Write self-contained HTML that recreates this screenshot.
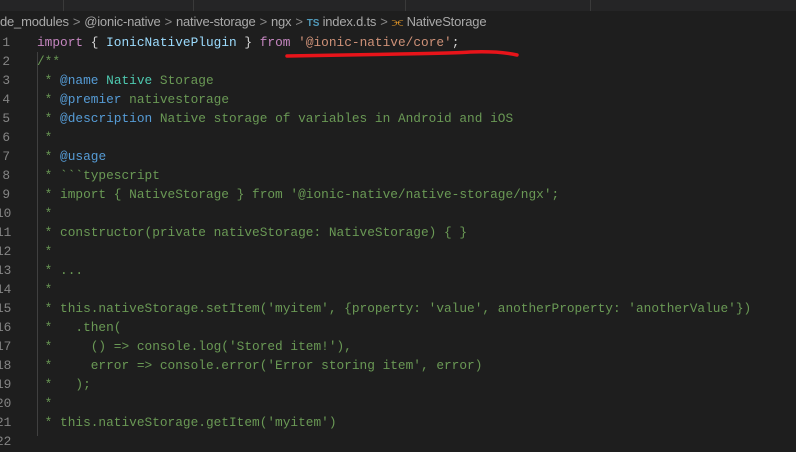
<!DOCTYPE html>
<html><head><style>
body{margin:0;width:796px;height:436px;background:#1e1e1e;overflow:hidden;position:relative;font-family:"Liberation Mono",monospace;}
.tabs{position:absolute;left:0;top:0;width:796px;height:11px;background:#252526;}
.tabs i{position:absolute;top:0;width:1px;height:11px;background:#3a3a3a}
.bc{position:absolute;left:0;top:12px;height:20px;line-height:20px;font-family:"Liberation Sans",sans-serif;font-size:13px;color:#a9a9a9;white-space:nowrap;letter-spacing:-0.2px}
.bc .s{color:#8a8a8a;margin:0 4px}
.ln{position:absolute;left:-4px;width:14px;font-size:12.8px;color:#858585;text-align:right}
.code{position:absolute;left:37px;font-size:12.8px;color:#6a9955}
.l{height:19.05px;line-height:19.05px;white-space:pre}
.k{color:#c586c0}.t{color:#4ec9b0}.v{color:#9cdcfe}.p{color:#d4d4d4}.st{color:#ce9178}.a{color:#569cd6}
</style></head><body>
<div class="tabs"><i style="left:63px"></i><i style="left:193px"></i><i style="left:405px"></i><i style="left:590px"></i></div>
<div class="bc">de_modules<span class="s">&gt;</span>@ionic-native<span class="s">&gt;</span>native-storage<span class="s">&gt;</span>ngx<span class="s">&gt;</span><span style="color:#519aba;font-weight:bold;font-size:10px">TS</span> index.d.ts<span class="s">&gt;</span><span style="color:#ee9d28">&#x2AD8;</span> NativeStorage</div>
<div style="position:absolute;left:37px;top:52px;width:1px;height:384px;background:#404040"></div>
<div class="ln" style="top:32.5px">
<div class="l">1</div><div class="l">2</div><div class="l">3</div><div class="l">4</div><div class="l">5</div><div class="l">6</div><div class="l">7</div><div class="l">8</div><div class="l">9</div><div class="l">10</div><div class="l">11</div><div class="l">12</div><div class="l">13</div><div class="l">14</div><div class="l">15</div><div class="l">16</div><div class="l">17</div><div class="l">18</div><div class="l">19</div><div class="l">20</div><div class="l">21</div><div class="l">22</div>
</div>
<div class="code" style="top:32.5px">
<div class="l"><span class="k">import</span><span class="p"> { </span><span class="v">IonicNativePlugin</span><span class="p"> } </span><span class="k">from</span><span class="p"> </span><span class="st">'@ionic-native/core'</span><span class="p">;</span></div>
<div class="l">/**</div>
<div class="l"> * <span class="a">@name</span> <span class="t">Native</span> Storage</div>
<div class="l"> * <span class="a">@premier</span> nativestorage</div>
<div class="l"> * <span class="a">@description</span> Native storage of variables in Android and iOS</div>
<div class="l"> *</div>
<div class="l"> * <span class="a">@usage</span></div>
<div class="l"> * &#96;&#96;&#96;typescript</div>
<div class="l"> * import { NativeStorage } from '@ionic-native/native-storage/ngx';</div>
<div class="l"> *</div>
<div class="l"> * constructor(private nativeStorage: NativeStorage) { }</div>
<div class="l"> *</div>
<div class="l"> * ...</div>
<div class="l"> *</div>
<div class="l"> * this.nativeStorage.setItem('myitem', {property: 'value', anotherProperty: 'anotherValue'})</div>
<div class="l"> *   .then(</div>
<div class="l"> *     () =&gt; console.log('Stored item!'),</div>
<div class="l"> *     error =&gt; console.error('Error storing item', error)</div>
<div class="l"> *   );</div>
<div class="l"> *</div>
<div class="l"> * this.nativeStorage.getItem('myitem')</div>
</div>
<svg style="position:absolute;left:0;top:0" width="796" height="436"><path d="M287 56 Q340 55 400 54 T470 52 Q500 51 517 55" stroke="#e8141a" stroke-width="3.5" fill="none" stroke-linecap="round"/></svg>
</body></html>
